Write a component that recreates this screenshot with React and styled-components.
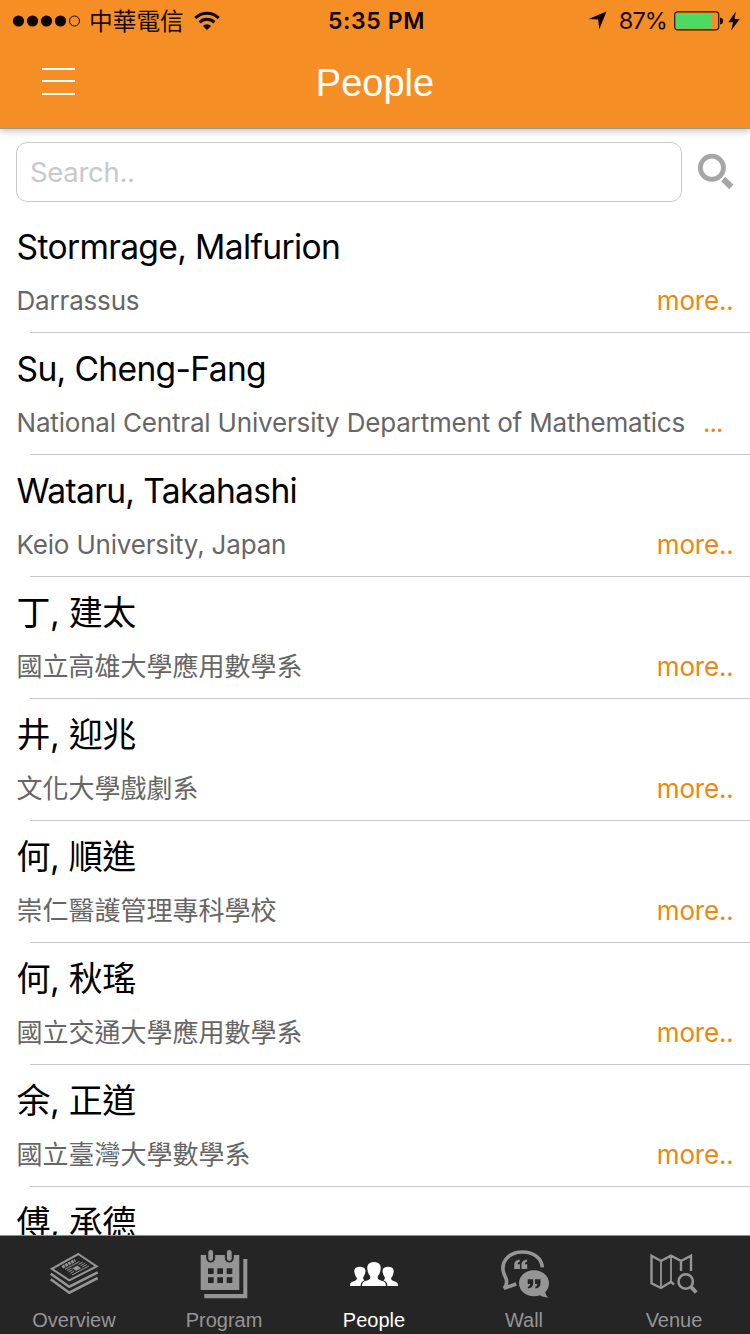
import React from "react";
import styled, { createGlobalStyle } from "styled-components";

const GlobalStyle = createGlobalStyle`
  * { box-sizing: border-box; }
  html, body { margin: 0; padding: 0; background: #fff; overflow: hidden; }
`;

const SYSTEM = `Inter, "Noto Sans CJK TC", sans-serif`;
const HELVETICA = `"Liberation Sans", Arial, sans-serif`;

const Screen = styled.div`
  width: 750px;
  height: 1334px;
  display: flex;
  flex-direction: column;
  overflow: hidden;
  background: #fff;
  font-family: ${SYSTEM};
`;

const Header = styled.header`
  flex: none;
  height: 129px;
  background: #f68e26;
  border-bottom: 1px solid #a39787;
  box-shadow: 0 2px 7px rgba(0, 0, 0, 0.26);
  z-index: 1;
`;

const StatusBar = styled.div`
  height: 40px;
  display: grid;
  grid-template-columns: 1fr auto 1fr;
  align-items: center;
  padding: 1px 10px 0 13px;
  color: #1a0a00;
`;

const StatusGroup = styled.div`
  display: flex;
  align-items: center;
  justify-content: ${(p) => (p.$end ? "flex-end" : "flex-start")};
  svg { display: block; flex: none; }
`;

const Carrier = styled.span`
  margin: -2px 10px 0 9px;
  font: 400 23.7px/38px "Noto Sans CJK TC", sans-serif;
`;

const Clock = styled.span`
  font-size: 23px;
  font-weight: 600;
  line-height: 38px;
  letter-spacing: 0.6px;
  color: #100600;
`;

const Percent = styled.span`
  margin: 0 7px 0 12px;
  font-size: 23.5px;
  line-height: 38px;
  letter-spacing: -0.9px;
`;

const NavBar = styled.div`
  height: 88px;
  display: grid;
  grid-template-columns: 120px 1fr 120px;
  align-items: center;
`;

const MenuButton = styled.button`
  width: 33px;
  height: 27px;
  margin: 0 0 6px 42px;
  padding: 0;
  border: 0;
  background: none;
  display: flex;
  flex-direction: column;
  justify-content: space-between;
`;

const MenuLine = styled.span`
  height: 2px;
  background: #fff;
`;

const Title = styled.h1`
  margin: 0 0 2px;
  text-align: center;
  font: 400 38px/44px ${HELVETICA};
  color: #fff;
`;

const SearchRow = styled.div`
  flex: none;
  height: 82px;
  padding: 13px 16px 9px;
  display: flex;
  gap: 14px;
`;

const SearchInput = styled.input`
  width: 666px;
  height: 60px;
  padding: 0 13px;
  border: 1px solid #c9c9c9;
  border-radius: 11px;
  background: #fff;
  font: 400 27.5px ${SYSTEM};
  letter-spacing: -0.3px;
  outline: none;
  &::placeholder { color: #c8c8cd; opacity: 1; }
`;

const List = styled.ul`
  flex: 1;
  min-height: 0;
  margin: 0;
  padding: 0;
  overflow: hidden;
  list-style: none;
`;

const Item = styled.li`
  height: 122px;
  padding: 12px 16.5px 0;
  background: linear-gradient(#c8c8c8, #c8c8c8) 30px 121px / 720px 1px no-repeat;
`;

const Name = styled.div`
  height: 47px;
  white-space: nowrap;
  font-size: ${(p) => (p.$cjk ? "34px" : "33.6px")};
  line-height: 47px;
  letter-spacing: ${(p) => (p.$cjk ? "-0.4px" : "-0.65px")};
  color: #000;
`;

const Detail = styled.div`
  height: 36px;
  margin-top: 13px;
  display: flex;
  justify-content: space-between;
  white-space: nowrap;
  font-size: 26px;
  line-height: 36px;
`;

const Affiliation = styled.span`
  letter-spacing: ${(p) => (p.$cjk ? "0" : "-0.18px")};
  color: #666;
`;

const More = styled.a`
  color: #ef860f;
  letter-spacing: ${(p) => (p.$short ? "-1px" : "-0.2px")};
  padding-right: ${(p) => (p.$short ? "11px" : "0")};
`;

const TabBar = styled.nav`
  flex: none;
  height: 99px;
  display: grid;
  grid-template-columns: repeat(5, 150px);
  background: #252525;
  border-top: 1px solid #8c8c8c;
  z-index: 1;
`;

const Tab = styled.a`
  padding: 13px 2px 0 0;
  display: flex;
  flex-direction: column;
  align-items: center;
  gap: 9px;
  font: 400 20px/24px ${HELVETICA};
  color: ${(p) => (p.$active ? "#fff" : "#959595")};
  svg { display: block; width: 50px; height: 50px; }
`;

const SignalDots = () => (
  <svg width="67" height="12" viewBox="0 0 67 12">
    {[5.5, 19.5, 33.5, 47.5].map((x) => (
      <circle key={x} cx={x} cy="6" r="5.6" fill="#0c0400" />
    ))}
    <circle cx="61.5" cy="6" r="5" fill="none" stroke="#1a0a00" />
  </svg>
);

const Wifi = () => (
  <svg width="26" height="20" viewBox="0 0 26 20" fill="none" stroke="#0c0400" strokeWidth="3">
    <path d="M1.3 7.1a16.6 16.6 0 0 1 23.4 0" />
    <path d="M5.6 11.4a10.5 10.5 0 0 1 14.8 0" />
    <path d="M13 19 8.9 14.9a5.9 5.9 0 0 1 8.2 0Z" fill="#0c0400" stroke="none" />
  </svg>
);

const Location = () => (
  <svg width="19" height="19" viewBox="0 0 19 19">
    <path d="M18.5 .5 11.3 18.2 10.2 8.6 .5 8Z" fill="#0c0400" />
  </svg>
);

const Battery = () => (
  <svg width="50" height="20" viewBox="0 0 50 20">
    <rect x=".7" y=".9" width="44" height="18" rx="2.8" fill="none" stroke="#2a1300" strokeWidth="1.2" />
    <rect x="2" y="2.2" width="36" height="15.4" rx="1" fill="#4cd964" />
    <path d="M46 6.5c4.3.5 4.3 6.5 0 7Z" fill="#1a0a00" />
  </svg>
);

const BoltSvg = styled.svg`
  margin-left: 4px;
`;

const Bolt = () => (
  <BoltSvg width="12" height="20" viewBox="0 0 12 20">
    <path d="M7.8.5.3 11.2H5L3.2 19.4 11.7 8.1H6.5Z" fill="#0c0400" />
  </BoltSvg>
);

const SearchSvg = styled.svg`
  flex: none;
  margin-top: 11px;
`;

const SearchIcon = () => (
  <SearchSvg width="38" height="38" viewBox="0 0 38 38" fill="none" stroke="#a6a6a6">
    <circle cx="15.9" cy="14.8" r="11.6" strokeWidth="4.8" />
    <path d="m27.2 26 8.1 8" strokeWidth="6" />
  </SearchSvg>
);

const OverviewIcon = () => (
  <svg viewBox="0 0 50 50" fill="none" stroke="currentColor" strokeWidth="2.1">
    <path d="M29.3 5 47.6 17.4 20.3 31.4 2.8 19.8Z" />
    <path d="M1.7 24.7 20.3 37.7 48.7 23.4M1.7 30.2 20.3 43.7 48.7 29" strokeWidth="2.6" />
    <path d="M13.3 18.2 26.4 11.2" strokeWidth="3" strokeDasharray="2.700 .7" />
    <path
      d="M16 20.300 30.500 12.500M17.800 21.600l4.700-2.500M19.600 22.900l4-2.100M21.400 24.300l3.800-2M29.500 15.400l4.200-2.300M31.500 16.700l4.300-2.300M33.200 18.100l4.800-2.600M23 26 39.800 17"
      strokeWidth="1"
    />
    <path d="m23.200 19.300 5-2.700 4 2.700-5 2.700Z" fill="currentColor" stroke="none" />
  </svg>
);

const ProgramIcon = () => (
  <svg viewBox="0 0 50 50" fill="currentColor">
    <path d="M1.7 6H40.3V41H1.7Z" />
    <path d="M44.3 10h4v39.3h-43v-4.3h39Z" />
    <path d="M11.7 4v5M30.3 4v5" stroke="#252525" strokeWidth="9" strokeLinecap="round" />
    <path d="M11.7 3.3v6.2M30.3 3.3v6.2" stroke="currentColor" strokeWidth="4.8" strokeLinecap="round" />
    <path d="M9 19.3h5.7V25H9ZM18.3 19.3H24V25h-5.7ZM27.7 19.3h5.6V25h-5.6ZM9 28.3h5.7V34H9ZM18.3 28.3H24V34h-5.7ZM27.7 28.3h5.6V34h-5.6Z" fill="#252525" />
  </svg>
);

const PeopleIcon = () => (
  <svg viewBox="0 0 50 50" fill="currentColor">
    <path d="M1 37c.1-2.800.6-3.600 2.600-4.200 3-.9 4.300-1.700 4.300-3.200 0-1.200-1.200-1.900-1.800-3.700-.6-1.800-1.100-3.600-.6-5.200.6-2 2.600-2.900 5.300-2.900s4.900.9 5.500 2.900c.5 1.600 0 3.400-.7 5.100-.6 1.500-1.500 2-1.500 3.300 0 .9.5 1.700 1.500 2.300-2.900.9-3.900 2.300-4 5.600Z" />
    <path d="M49 37c-.1-2.800-.6-3.600-2.600-4.200-3-.9-4.300-1.700-4.300-3.200 0-1.200 1.200-1.900 1.800-3.700.6-1.800 1.100-3.600.6-5.200-.6-2-2.600-2.900-5.300-2.900s-4.900.9-5.500 2.900c-.5 1.600 0 3.400.7 5.100.6 1.500 1.500 2 1.500 3.300 0 .9-.5 1.700-1.500 2.300 2.900.9 3.900 2.300 4 5.600Z" />
    <path
      d="M13 37c.1-3 .8-4.200 3.400-5 3.700-1.100 5-1.900 5-3.800 0-1.500-1.500-2.200-2.200-4.400-.8-2.400-1.300-4.900-.6-7C19.500 14.200 21.800 13 25 13s5.500 1.200 6.400 3.800c.7 2.100.2 4.600-.6 7-.7 2.200-2.200 2.900-2.200 4.400 0 1.900 1.300 2.700 5 3.800 2.600.8 3.300 2 3.400 5Z"
      stroke="#252525" strokeWidth="1.400" paintOrder="stroke"
    />
  </svg>
);

const WallIcon = () => (
  <svg viewBox="0 0 50 50">
    <path
      d="M17.2 35 5 39.200C8.400 35.500 8.500 32.500 6.500 28.300 -1 14 9.500 3 23.500 3 35 3 42.800 9.500 43.300 18.400"
      fill="none" stroke="currentColor" strokeWidth="3.600"
    />
    <path d="M35 21.200c8.600 0 15 5.700 15 12.800 0 3.800-1.500 6.900-3.700 9.100.1 2.200 1.100 4 3.100 5.600-3.600-.2-6.500-1.100-8.300-2.400-1.900.6-4 .9-6.100.9-8.600 0-15-5.900-15-13s6.400-13 15-13Z" fill="currentColor" />
    <path d="M20.800 10.800v1.600c-1.500.4-2.100 1.400-2.200 2.800h2.300v4.700h-5.700v-4c0-3.100 2-5 5.600-5.100ZM28.100 10.800v1.600c-1.500.4-2.100 1.400-2.200 2.800h2.300v4.700h-5.700v-4c0-3.100 2-5 5.600-5.100Z" fill="currentColor" />
    <path d="M28.700 30.300h5.500v4c0 3.200-1.900 5-5.300 5.200v-1.700c1.400-.4 2-1.400 2.100-2.800h-2.300ZM36 30.300h5.500v4c0 3.200-1.900 5-5.300 5.200v-1.700c1.400-.4 2-1.400 2.100-2.800H36Z" fill="#252525" />
  </svg>
);

const VenueIcon = () => (
  <svg viewBox="0 0 50 50" fill="none" stroke="currentColor" strokeWidth="2.400">
    <path d="M32 22V12L22 6.700 12 12 2.500 6.800V34.200L12 39 22 32.800 25 35.600M32 12 42 6.800V22" />
    <path d="M12 12V39M22 7V33" strokeWidth="1.800" />
    <circle cx="36.700" cy="32.500" r="7.200" strokeWidth="2.600" />
    <path d="m42 37.900 5.300 5.600" strokeWidth="3.800" />
  </svg>
);

const people = [
  { name: "Stormrage, Malfurion", place: "Darrassus" },
  { name: "Su, Cheng-Fang", place: "National Central University Department of Mathematics", short: true },
  { name: "Wataru, Takahashi", place: "Keio University, Japan" },
  { name: "丁, 建太", place: "國立高雄大學應用數學系", cjk: true },
  { name: "井, 迎兆", place: "文化大學戲劇系", cjk: true },
  { name: "何, 順進", place: "崇仁醫護管理專科學校", cjk: true },
  { name: "何, 秋瑤", place: "國立交通大學應用數學系", cjk: true },
  { name: "余, 正道", place: "國立臺灣大學數學系", cjk: true },
  { name: "傅, 承德", cjk: true },
];

const tabs = [
  { label: "Overview", Icon: OverviewIcon },
  { label: "Program", Icon: ProgramIcon },
  { label: "People", Icon: PeopleIcon, active: true },
  { label: "Wall", Icon: WallIcon },
  { label: "Venue", Icon: VenueIcon },
];

export default function App() {
  return (
    <Screen>
      <GlobalStyle />
      <Header>
        <StatusBar>
          <StatusGroup>
            <SignalDots />
            <Carrier>中華電信</Carrier>
            <Wifi />
          </StatusGroup>
          <Clock>5:35 PM</Clock>
          <StatusGroup $end>
            <Location />
            <Percent>87%</Percent>
            <Battery />
            <Bolt />
          </StatusGroup>
        </StatusBar>
        <NavBar>
          <MenuButton aria-label="Menu">
            <MenuLine />
            <MenuLine />
            <MenuLine />
          </MenuButton>
          <Title>People</Title>
        </NavBar>
      </Header>
      <SearchRow>
        <SearchInput placeholder="Search.." />
        <SearchIcon />
      </SearchRow>
      <List>
        {people.map((p) => (
          <Item key={p.name}>
            <Name $cjk={p.cjk}>{p.name}</Name>
            {p.place && (
              <Detail>
                <Affiliation $cjk={p.cjk}>{p.place}</Affiliation>
                <More $short={p.short}>{p.short ? "..." : "more.."}</More>
              </Detail>
            )}
          </Item>
        ))}
      </List>
      <TabBar>
        {tabs.map(({ label, Icon, active }) => (
          <Tab key={label} $active={active}>
            <Icon />
            {label}
          </Tab>
        ))}
      </TabBar>
    </Screen>
  );
}
